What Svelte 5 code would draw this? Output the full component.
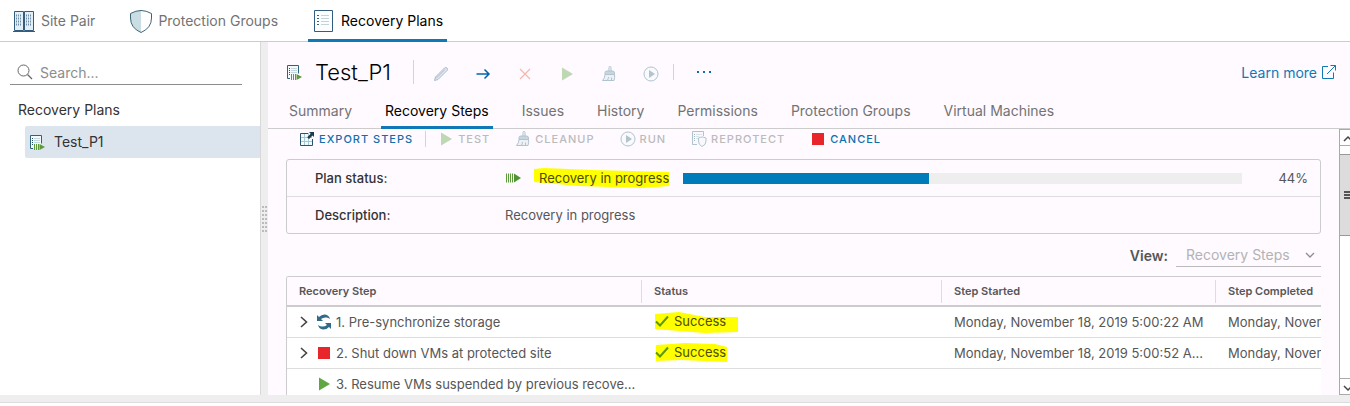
<script>
  const tabs = ['Summary', 'Recovery Steps', 'Issues', 'History', 'Permissions', 'Protection Groups', 'Virtual Machines'];
  const progress = 44;
  const steps = [
    { icon: 'sync', name: '1. Pre-synchronize storage', expandable: true, status: 'Success', started: 'Monday, November 18, 2019 5:00:22 AM', completed: 'Monday, November' },
    { icon: 'stop', name: '2. Shut down VMs at protected site', expandable: true, status: 'Success', started: 'Monday, November 18, 2019 5:00:52 A...', completed: 'Monday, November' },
    { icon: 'play', name: '3. Resume VMs suspended by previous recove...', expandable: false, status: '', started: '', completed: '' }
  ];
  const marks = ['0,2 24,0 50,5 83,5 83,20 50,21 36,20 0,17', '1,2 30,0 60,1 72,4 72,19 26,17 1,18'];
</script>

{#snippet planIcon()}
  <svg class="i16" viewBox="0 0 16 16" aria-hidden="true">
    <path d="M4 14.500H1.500V1.500h11v8" fill="#f4fafb" stroke="#2d6478" />
    <path d="M3 4.500h1M3 6.500h1M3 8.500h1M3 10.500h1" stroke="#28566b" />
    <path d="M5 4.500h6M5 6.500h6M5 8.500h6" stroke="#c5d8dd" />
    <path d="M5.500 10v6M7.500 10v6M9.500 10v6" stroke="#5c9a3c" />
    <path d="M10.500 10l5.500 3-5.500 3z" fill="#5c9a3c" />
  </svg>
{/snippet}

{#snippet playIcon()}
  <svg class="i16" viewBox="0 0 16 16" aria-hidden="true"><path d="M3 1.500L14 8 3 14.500z" fill="#5fa743" /></svg>
{/snippet}

{#snippet broomIcon()}
  <svg class="i16" viewBox="0 0 16 16" aria-hidden="true">
    <path d="M8 5V1.500a1 1 0 0 1 2 0V5" fill="#fff" stroke="#3d7387" />
    <path d="M4 8.500V6.500Q4 5 6 5h5.500Q13.500 5 13.500 7v1.500z" fill="#78a2b0" stroke="#3d7387" />
    <path d="M4 8.500Q4 12 1.500 14.500H13q1-3 .5-6z" fill="#d5e6eb" stroke="#3d7387" />
    <path d="M6.500 14q1-1.500 1-3M10.500 14v-2.500" stroke="#3d7387" fill="none" />
  </svg>
{/snippet}

{#snippet runIcon()}
  <svg class="i16" viewBox="0 0 16 16" aria-hidden="true">
    <circle cx="8" cy="8" r="7" fill="#f5fbfc" stroke="#3d7387" />
    <path d="M6 4l6 4-6 4z" fill="#3d7387" />
  </svg>
{/snippet}

{#snippet stopIcon()}
  <svg class="i16" viewBox="0 0 16 16" aria-hidden="true"><path d="M2 2h12v12H2z" fill="#e8252b" /></svg>
{/snippet}

<div class="app">
  <nav class="top" aria-label="Sections">
    <a href="#site"><svg class="i24" viewBox="0 0 24 24" aria-hidden="true">
        <path d="M2.500 2.500h9v19h-9zM12.500 2.500h9v19h-9z" fill="#e4eef5" stroke="#325c80" />
        <path d="M1 22.500h22" stroke="#325c80" />
        <path d="M4 6.500h6M4 9.500h6M4 12.500h6M4 15.500h6M14 6.500h6M14 9.500h6M14 12.500h6M14 15.500h6" stroke="#6d8da8" stroke-dasharray="1 1" stroke-width="2" />
      </svg>Site Pair</a>
    <a href="#groups"><svg class="i24" viewBox="0 0 24 24" aria-hidden="true">
        <path d="M12 1.500Q17 1.500 22.500 4.500V9q0 10-10.500 14.500Q1.500 19 1.500 9V4.500Q7 1.500 12 1.500z" fill="#fff" />
        <path d="M12 1.500V23.500Q1.500 19 1.500 9V4.500Q7 1.500 12 1.500z" fill="#c9dde3" />
        <path d="M12 1.500Q17 1.500 22.500 4.500V9q0 10-10.500 14.500Q1.500 19 1.500 9V4.500Q7 1.500 12 1.500z" fill="none" stroke="#3c6478" />
      </svg>Protection Groups</a>
    <a href="#plans" class="active" aria-current="page"><svg class="i24" viewBox="0 0 24 24" aria-hidden="true">
        <path d="M2.500 1.500h18v21h-18z" fill="#fbfdfe" stroke="#325c80" />
        <path d="M5 6.500h2M5 9.500h2M5 12.500h2M5 15.500h2" stroke="#3c6478" />
        <path d="M9 6.500h8M9 9.500h8M9 12.500h8M9 15.500h8" stroke="#c4d3da" />
      </svg>Recovery Plans</a>
  </nav>

  <div class="body">
    <aside>
      <label class="search">
        <svg class="i16" viewBox="0 0 16 16" aria-hidden="true"><circle cx="6.500" cy="6.500" r="5.500" fill="none" stroke="#666" /><path d="M10.500 10.500L15 15" stroke="#666" stroke-width="1.200" /></svg>
        <input type="search" placeholder="Search..." aria-label="Search" />
      </label>
      <h2>Recovery Plans</h2>
      <a class="node" href="#test-p1">{@render planIcon()}Test_P1</a>
    </aside>
    <div class="splitter"><i></i></div>

    <main>
      <header>
        {@render planIcon()}
        <h1>Test_P1</h1>
        <span class="sep"></span>
        <div class="actions">
          <button disabled aria-label="Edit"><svg class="i16" viewBox="0 0 16 16" aria-hidden="true"><path d="M1.500 14.500l1-3.500 9-9q1.500-1 2.500 0t0 2.500l-9 9z" fill="#b9d0da" stroke="#325c80" /><path d="M3 12.500l9-9" stroke="#325c80" /></svg></button>
          <button aria-label="Move"><svg class="i16" viewBox="0 0 16 16" aria-hidden="true"><path d="M1.500 8H14M9.500 3.500L14 8l-4.500 4.500" fill="none" stroke="#0065ab" stroke-width="1.500" /></svg></button>
          <button disabled aria-label="Delete"><svg class="i16" viewBox="0 0 16 16" aria-hidden="true"><path d="M3 3l10 10M13 3L3 13" stroke="#f0522e" stroke-width="1.200" /></svg></button>
          <button disabled aria-label="Test">{@render playIcon()}</button>
          <button disabled aria-label="Cleanup">{@render broomIcon()}</button>
          <button disabled aria-label="Run">{@render runIcon()}</button>
        </div>
        <span class="sep short"></span>
        <button class="more" aria-label="More actions"><svg class="i16" viewBox="0 0 16 16" aria-hidden="true"><path d="M1 7h2v2H1zM7 7h2v2H7zM13 7h2v2h-2z" fill="#0f6fad" /></svg></button>
        <a class="learn" href="#help">Learn more<svg class="i16" viewBox="0 0 16 16" aria-hidden="true"><path d="M7 2.500H1.500v12h11V8.500M9.500 1.500h5v5M14.500 1.500L6 10" fill="none" stroke="#0f79b8" /></svg></a>
      </header>

      <nav class="tabs" aria-label="Plan">
        {#each tabs as tab}
          <a href="#tab" class:active={tab === 'Recovery Steps'}>{tab}</a>
        {/each}
      </nav>

      <div class="scroller">
        <div class="content">
          <div class="toolbar">
            <button><svg class="i16" viewBox="0 0 16 16" aria-hidden="true"><path d="M1.500 2.500h12v12h-12z" fill="#f2f9fb" /><path d="M5.500 2v12M9.500 2v12M1 6.500h12M1 10.500h12" stroke="#a3c8d4" /><path d="M9 2.500H1.500v12h12V8" fill="none" stroke="#27536b" /><path d="M10 1h5v5l-1.500-1.500-3.500 3.500-1.800-1.800 3.500-3.500z" fill="#1e3b4d" /></svg>EXPORT STEPS</button>
            <span class="sep short"></span>
            <button disabled>{@render playIcon()}TEST</button>
            <button disabled>{@render broomIcon()}CLEANUP</button>
            <button disabled>{@render runIcon()}RUN</button>
            <button disabled><svg class="i16" viewBox="0 0 16 16" aria-hidden="true"><path d="M6 13.500H1.500V.5h11V5" fill="#f2f9fb" stroke="#3d7387" /><path d="M3 3.500h1M3 5.500h1M3 7.500h1M3 9.500h1" stroke="#28566b" /><path d="M5 3.500h6M5 5.500h3M5 7.500h2" stroke="#a9c4cb" /><path d="M7.500 7q2-1 3.500-1t4 1v3q0 4-4 5.500-3.500-1.500-3.500-5.500z" fill="#f2f9fb" stroke="#3d7387" /></svg>REPROTECT</button>
            <button>{@render stopIcon()}CANCEL</button>
          </div>

          <dl>
            <div>
              <dt>Plan status:</dt>
              <dd>
                <svg class="i16" viewBox="0 0 16 16" aria-hidden="true"><path d="M1.500 3.500v9M3.500 3.500v9M5.500 3.500v9M7.500 3.500v9" stroke="#5c9a3c" /><path d="M9 3.500L16 8l-7 4.500z" fill="#4f9535" /></svg>
                <span class="marked status">
                  <svg viewBox="0 0 137 20" preserveAspectRatio="none" aria-hidden="true"><path d="M0 1L10 0 60 2 137 4V18L110 20 45 18 0 14z" fill="#ff0" /></svg>
                  <span>Recovery in progress</span>
                </span>
                <span class="bar" role="progressbar" aria-label="Plan progress" aria-valuenow={progress}><i style="width: {progress}%"></i></span>
                <span class="pct">{progress}%</span>
              </dd>
            </div>
            <div>
              <dt>Description:</dt>
              <dd>Recovery in progress</dd>
            </div>
          </dl>

          <div class="view">
            <label for="view">View:</label>
            <span class="select">
              <select id="view" disabled><option>Recovery Steps</option></select>
              <svg viewBox="0 0 10 10" aria-hidden="true"><path d="M1 3l4 4 4-4" fill="none" stroke="#8c8c8c" stroke-width="1.300" /></svg>
            </span>
          </div>

          <div class="grid">
            <table>
              <colgroup><col class="c1" /><col class="c2" /><col class="c3" /><col class="c3" /></colgroup>
              <thead>
                <tr>
                  {#each ['Recovery Step', 'Status', 'Step Started', 'Step Completed'] as h}
                    <th scope="col"><span>{h}</span></th>
                  {/each}
                </tr>
              </thead>
              <tbody>
                {#each steps as s, n}
                  <tr>
                    <td>
                      <div class="cell">
                        {#if s.expandable}
                          <button class="expand" aria-label="Expand"><svg viewBox="0 0 10 12" aria-hidden="true"><path d="M2 1l5.500 5L2 11" fill="none" stroke="#444" stroke-width="1.600" /></svg></button>
                        {:else}
                          <span class="expand"></span>
                        {/if}
                        {#if s.icon === 'sync'}
                          <svg class="i16" viewBox="0 0 16 16" aria-hidden="true"><path d="M1 1v6h6L5 5q2.500-2 5.500-1.500 2 .3 3.500 1.500-1-4-5-4.500Q5.500.3 3 3zM15 15V9H9l2 2q-2.500 2-5.500 1.500-2-.3-3.500-1.500 1 4 5 4.500 3.500.2 6-2.500z" fill="#316a8a" /></svg>
                        {:else if s.icon === 'stop'}
                          {@render stopIcon()}
                        {:else}
                          {@render playIcon()}
                        {/if}
                        {s.name}
                      </div>
                    </td>
                    <td>
                      {#if s.status}
                        <span class="marked ok">
                          <svg class="mark" viewBox="0 0 84 21" aria-hidden="true"><polygon points={marks[n]} fill="#ff0" /></svg>
                          <svg class="i16" viewBox="0 0 16 16" aria-hidden="true"><path d="M2 8.500L6 12.500 14 3.500" fill="none" stroke="#5a9a00" stroke-width="2" /></svg>
                          <span>{s.status}</span>
                        </span>
                      {/if}
                    </td>
                    <td>{s.started}</td>
                    <td>{s.completed}</td>
                  </tr>
                {/each}
              </tbody>
            </table>
          </div>
        </div>

        <div class="scrollbar" aria-hidden="true">
          <div class="arrow"><svg viewBox="0 0 10 10"><path d="M1 7l4-4 4 4" fill="none" stroke="#444" stroke-width="1.500" /></svg></div>
          <div class="thumb"><i></i></div>
          <div class="arrow end"><svg viewBox="0 0 10 10"><path d="M1 3l4 4 4-4" fill="none" stroke="#444" stroke-width="1.500" /></svg></div>
        </div>
      </div>
    </main>
  </div>
</div>

<style>
  :global(body) { margin: 0; }
  .app { box-sizing: border-box; height: 100vh; padding-bottom: 3px; display: flex; flex-direction: column; font-family: Inter, "Open Sans", sans-serif; font-size: 13px; color: #565656; background: #fff; overflow: hidden; }
  .app *, .app *::before { box-sizing: border-box; }
  a { text-decoration: none; color: inherit; }
  button { border: 0; padding: 0; background: none; font: inherit; letter-spacing: inherit; color: inherit; display: flex; align-items: center; }
  svg { display: block; flex: none; }
  .i16 { width: 16px; height: 16px; }
  .i24 { width: 24px; height: 24px; }

  .top { flex: none; height: 42px; display: flex; gap: 26px; padding-left: 8px; border-bottom: 1px solid #ccc; font-size: 14px; color: #737373; }
  .top a { display: flex; align-items: center; gap: 5px; padding: 0 4px; height: 41px; }
  .top .active { height: 42px; padding-bottom: 1px; color: #000; box-shadow: inset 0 -3px #0f79b8; }

  .body { flex: 1; min-height: 0; display: flex; border-bottom: 1px solid #ddd; padding-bottom: 7px; background: #eee; }
  aside { flex: none; width: 260px; background: #fff; padding-top: 18px; }
  .search { display: flex; align-items: center; gap: 7px; margin: 0 18px 0 10px; padding-left: 7px; height: 25px; border-bottom: 1px solid #8c8c8c; }
  .search input { flex: 1; min-width: 0; border: 0; outline: 0; padding: 0; background: none; font: inherit; font-size: 14px; }
  .search input::placeholder { color: #8c8c8c; opacity: 1; }
  h2 { margin: 15px 0 6px 18px; font-size: 14px; line-height: 20px; font-weight: 400; color: #333; }
  .node { display: flex; align-items: center; gap: 9px; height: 32px; margin-left: 25px; padding: 0 0 1px 4px; background: #dce5ed; border-radius: 2px 0 0 2px; font-size: 14px; color: #333; }
  .splitter { flex: none; width: 8px; border-left: 1px solid #d8d8d8; display: flex; align-items: center; }
  .splitter i { width: 6px; height: 30px; margin-left: 1px; background: repeating-linear-gradient(#eee 0 2px, transparent 2px 4px), repeating-linear-gradient(90deg, #bbb 0 2px, #eee 2px 3px); }

  main { flex: 1; min-width: 0; display: flex; flex-direction: column; background: #fefaff; }
  header { flex: none; display: flex; align-items: center; height: 60px; padding: 0 13px 0 18px; }
  h1 { margin: 0 22px 0 13px; font-size: 22px; font-weight: 300; line-height: 28px; color: #000; }
  .sep { flex: none; width: 1px; height: 24px; background: #d4d4d4; }
  .sep.short { height: 16px; }
  .actions { display: flex; gap: 26px; margin: 4px 14px 0 19px; }
  button:disabled svg { opacity: 0.4; }
  .more { margin-left: 22px; }
  .learn { margin-left: auto; display: flex; align-items: center; gap: 4px; font-size: 14px; color: #0f79b8; }

  .tabs { flex: none; display: flex; gap: 25px; height: 27px; padding-left: 17px; border-bottom: 1px solid #ccc; font-size: 14px; color: #737373; }
  .tabs a { height: 27px; line-height: 18px; padding: 0 4px; white-space: nowrap; }
  .tabs .active { color: #000; box-shadow: inset 0 -3px #0f79b8; }

  .scroller { flex: 1; min-height: 0; display: flex; overflow: hidden; }
  .content { flex: 1; min-width: 0; padding: 1px 18px 0; }
  .toolbar { display: flex; align-items: center; height: 18px; margin-bottom: 11px; padding-left: 13px; font-size: 11px; font-weight: 500; letter-spacing: 1px; color: #0f6fad; }
  .toolbar button { gap: 4px; margin-right: 25px; white-space: nowrap; }
  .toolbar button:first-child { margin-right: 12px; }
  .toolbar .sep { margin-right: 12px; }
  .toolbar button:disabled { color: #bbb; }

  dl { margin: 0; border: 1px solid #ccc; border-radius: 3px; }
  dl div { display: flex; align-items: center; height: 36px; padding: 0 12px 0 28px; }
  dl div + div { height: 37px; border-top: 1px solid #ddd; }
  dt { flex: none; width: 190px; font-weight: 500; color: #333; }
  dd { flex: 1; min-width: 0; margin: 0; display: flex; align-items: center; }
  .marked { position: relative; display: inline-flex; align-items: center; white-space: nowrap; }
  .marked > span, .marked .i16 { position: relative; }
  .status { margin: 0 14px 0 18px; color: #4d4d00; }
  .status > svg { position: absolute; left: -5px; top: -2px; width: calc(100% + 5px); height: 20px; }
  .bar { flex: 1; height: 11px; background: #eee; }
  .bar i { display: block; height: 11px; background: #007cbb; }
  .pct { width: 66px; text-align: right; }

  .view { display: flex; justify-content: flex-end; align-items: center; gap: 8px; height: 24px; margin: 9px 0; font-size: 14px; }
  .view label { font-weight: 600; }
  .select { position: relative; width: 145px; border-bottom: 1px solid #bbb; }
  select { appearance: none; width: 100%; height: 23px; padding: 0 0 0 10px; border: 0; background: none; font: inherit; color: #b3b3b3; opacity: 1; }
  .select svg { position: absolute; right: 6px; top: 7px; width: 10px; height: 10px; }

  .grid { overflow: hidden; border: 1px solid #ccc; border-right: 0; border-radius: 3px 0 0 0; }
  table { table-layout: fixed; width: 1203px; border-collapse: separate; border-spacing: 0; background: #fff; }
  .c1 { width: 355px; }
  .c2 { width: 300px; }
  .c3 { width: 274px; }
  th { height: 30px; padding: 3px 0 2px; background: #fefaff; border-bottom: 2px solid #ccc; text-align: left; font-size: 11px; font-weight: 600; }
  th span { display: block; line-height: 23px; padding-left: 12px; border-right: 1px solid #ddd; }
  td { height: 31px; padding: 0 0 0 12px; border-bottom: 1px solid #ddd; white-space: nowrap; overflow: hidden; }
  .cell { display: flex; align-items: center; gap: 4px; }
  .expand { flex: none; width: 13px; height: 12px; }
  .expand svg { width: 10px; height: 12px; }
  .ok { gap: 4px; color: #4d4d00; }
  .ok .mark { position: absolute; left: 1px; top: -1px; width: 84px; height: 21px; }

  .scrollbar { flex: none; width: 11px; display: flex; flex-direction: column; border: solid #aaa; border-width: 1px 0 1px 1px; background: #fff; overflow: hidden; }
  .arrow { flex: none; height: 16px; padding: 4px 0 0 3px; border-bottom: 1px solid #aaa; }
  .arrow.end { margin-top: auto; border-bottom: 0; border-top: 1px solid #aaa; }
  .arrow svg { width: 10px; height: 10px; }
  .thumb { flex: none; height: 82px; margin-top: 8px; background: #dcdcdc; border: solid #999; border-width: 1px 0; display: flex; align-items: center; }
  .thumb i { width: 10px; height: 8px; margin-left: 4px; background: repeating-linear-gradient(#555 0 2px, transparent 2px 3px); }
</style>
